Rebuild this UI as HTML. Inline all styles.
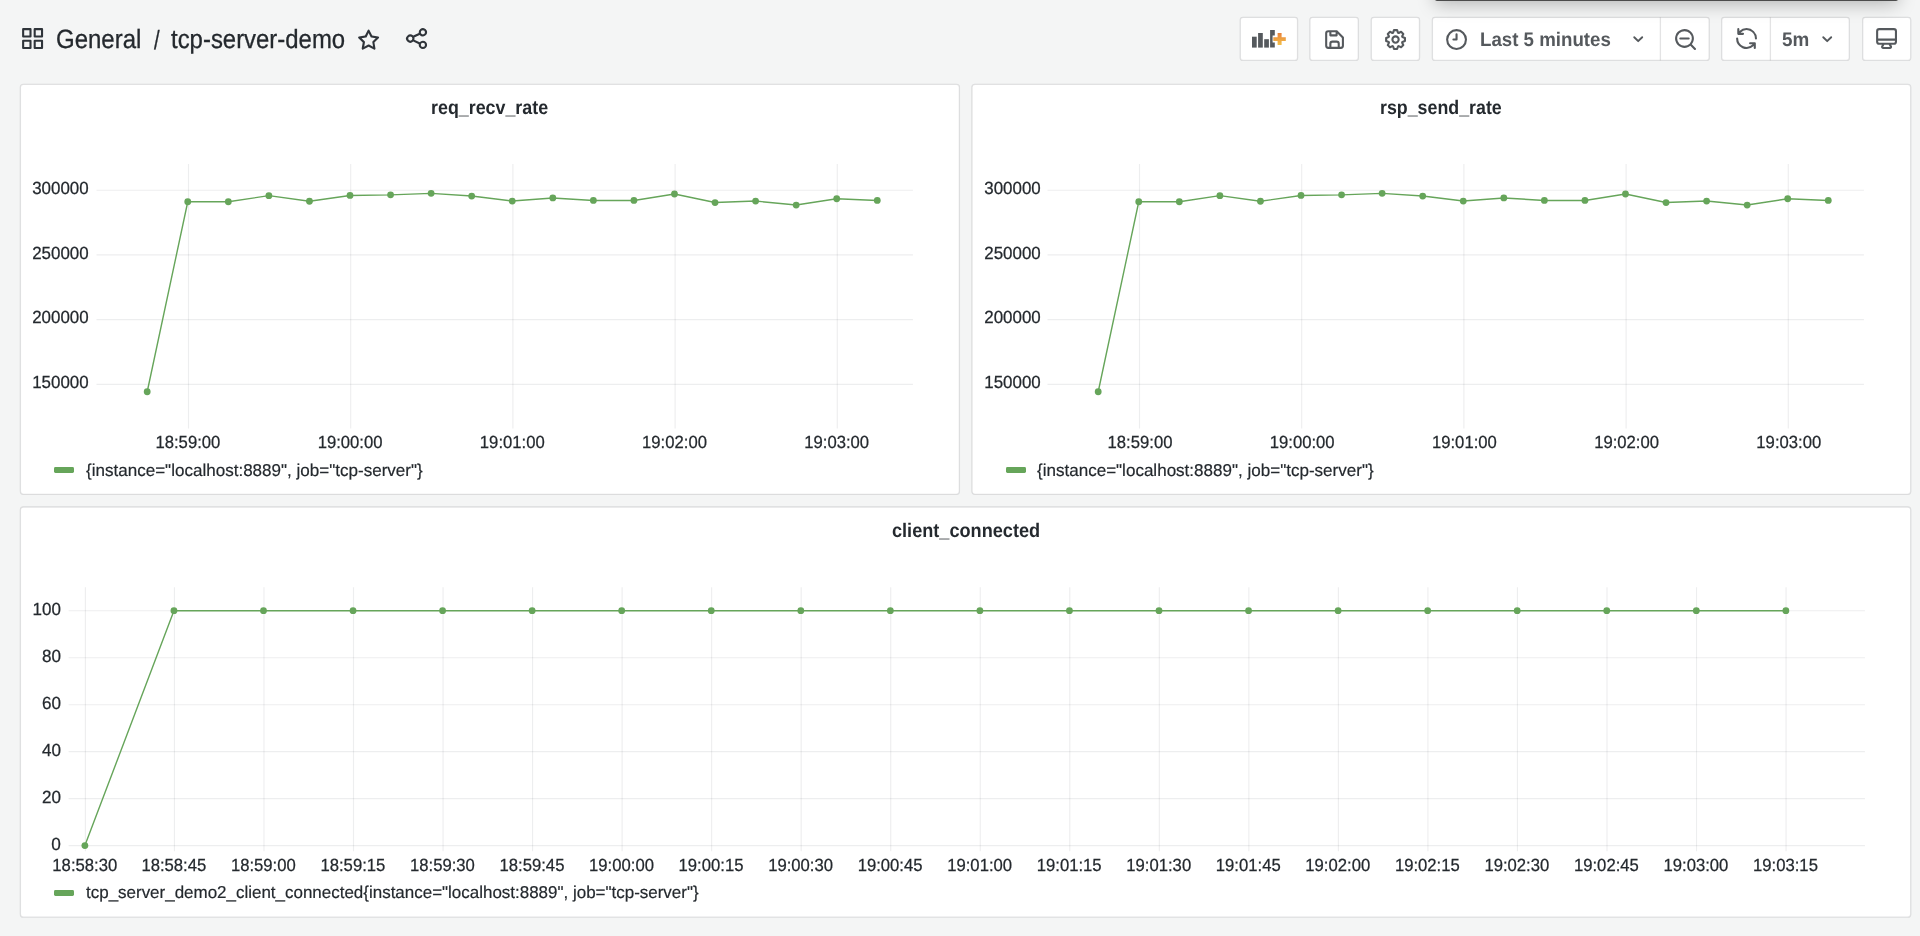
<!DOCTYPE html>
<html lang="en"><head><meta charset="utf-8"><title>tcp-server-demo - Grafana</title>
<style>
html,body{margin:0;padding:0}
body{width:1920px;height:936px;overflow:hidden;position:relative;background:#f4f5f5;
 font-family:"Liberation Sans", sans-serif;color:#24292e}
.ic,.ch,.sw,.t,.bg{position:absolute}
.bg{left:0;top:0}
.ch text{font-family:"Liberation Sans", sans-serif;text-rendering:geometricPrecision}
.sw{width:19.7px;height:5.7px;border-radius:1.4px;background:#66a55a}
.t{white-space:nowrap;transform-origin:0 0;text-rendering:geometricPrecision}
.tip{position:absolute;left:1434.6px;top:-30px;width:463.6px;height:31px;background:#4c4c4c;border-radius:2px;
 box-shadow:0 3px 18px rgba(0,0,0,.27)}
#root{position:absolute;left:0;top:0;width:1920px;height:936px;will-change:transform}
</style></head><body><div id="root">
<svg class="bg" width="1920" height="936" viewBox="0 0 1920 936"><rect x="1240.3" y="17.4" width="57.25" height="43.05" rx="2.7" ry="2.7" fill="#fff" stroke="rgba(36,41,46,0.13)" stroke-width="1.3"/><rect x="1309.9" y="17.4" width="48.4" height="43.05" rx="2.7" ry="2.7" fill="#fff" stroke="rgba(36,41,46,0.13)" stroke-width="1.3"/><rect x="1371.3" y="17.4" width="48.2" height="43.05" rx="2.7" ry="2.7" fill="#fff" stroke="rgba(36,41,46,0.13)" stroke-width="1.3"/><rect x="1432.4" y="17.4" width="276.8" height="43.05" rx="2.7" ry="2.7" fill="#fff" stroke="rgba(36,41,46,0.13)" stroke-width="1.3"/><rect x="1721.7" y="17.4" width="127.6" height="43.05" rx="2.7" ry="2.7" fill="#fff" stroke="rgba(36,41,46,0.13)" stroke-width="1.3"/><rect x="1862.7" y="17.4" width="48" height="43.05" rx="2.7" ry="2.7" fill="#fff" stroke="rgba(36,41,46,0.13)" stroke-width="1.3"/><path d="M1660.4 17.4V60.45" stroke="rgba(36,41,46,0.13)" stroke-width="1.3"/><path d="M1770.4 17.4V60.45" stroke="rgba(36,41,46,0.13)" stroke-width="1.3"/><rect x="20.4" y="84.3" width="939" height="410" rx="3" ry="3" fill="#fff" stroke="rgba(36,41,46,0.13)" stroke-width="1.3"/><rect x="972" y="84.3" width="938.7" height="410" rx="3" ry="3" fill="#fff" stroke="rgba(36,41,46,0.13)" stroke-width="1.3"/><rect x="20.4" y="507" width="1890.3" height="410.2" rx="3" ry="3" fill="#fff" stroke="rgba(36,41,46,0.13)" stroke-width="1.3"/></svg><div class="tip"></div>
<svg class="ic" style="left:19.55px;top:26.2px" width="25.2" height="25.2" viewBox="0 0 24 24"><path fill="#2f343a" d="M10,13H3a1,1,0,0,0-1,1v7a1,1,0,0,0,1,1h7a1,1,0,0,0,1-1V14A1,1,0,0,0,10,13ZM9,20H4V15H9ZM21,2H14a1,1,0,0,0-1,1v7a1,1,0,0,0,1,1h7a1,1,0,0,0,1-1V3A1,1,0,0,0,21,2ZM20,9H15V4h5Zm1,4H14a1,1,0,0,0-1,1v7a1,1,0,0,0,1,1h7a1,1,0,0,0,1-1V14A1,1,0,0,0,21,13Zm-1,7H15V15h5ZM10,2H3A1,1,0,0,0,2,3v7a1,1,0,0,0,1,1h7a1,1,0,0,0,1-1V3A1,1,0,0,0,10,2ZM9,9H4V4H9Z"/></svg>
<div id="t_general" class="t" style="left:56.06px;top:25.01px;font-size:26.4px;line-height:29.04px;color:#24292e;font-weight:normal;-webkit-text-stroke:0.3px #24292e;transform:scaleX(0.9087)">General</div><div id="t_slash" class="t" style="left:153.90px;top:26.01px;font-size:26.4px;line-height:29.04px;color:#24292e;font-weight:normal;-webkit-text-stroke:0.3px #24292e;transform:scaleX(0.7659)">/</div><div id="t_name" class="t" style="left:170.80px;top:25.01px;font-size:26.4px;line-height:29.04px;color:#24292e;font-weight:normal;-webkit-text-stroke:0.3px #24292e;transform:scaleX(0.9064)">tcp-server-demo</div>
<svg class="ic" style="left:355.97px;top:26.6px" width="25.2" height="25.2" viewBox="0 0 24 24"><path fill="#2f343a" d="M22,9.67A1,1,0,0,0,21.14,9l-5.69-.83L12.9,3a1,1,0,0,0-1.8,0L8.55,8.16,2.86,9a1,1,0,0,0-.81.68,1,1,0,0,0,.25,1l4.13,4-1,5.68A1,1,0,0,0,6.9,21.44L12,18.77l5.1,2.67a.93.93,0,0,0,.46.12,1,1,0,0,0,.59-.19,1,1,0,0,0,.4-1l-1-5.68,4.13-4A1,1,0,0,0,22,9.67Zm-6.15,4a1,1,0,0,0-.29.88l.72,4.2-3.76-2a1.06,1.06,0,0,0-.94,0l-3.76,2,.72-4.2a1,1,0,0,0-.29-.88l-3-3,4.21-.61a1,1,0,0,0,.76-.55L12,5.7l1.88,3.82a1,1,0,0,0,.76.55l4.21.61Z"/></svg>
<svg class="ic" style="left:403.8px;top:26.3px" width="25.2" height="25.2" viewBox="0 0 24 24"><path fill="#2f343a" d="M18,14a4,4,0,0,0-3.08,1.48l-5.1-2.35a3.64,3.64,0,0,0,0-2.26l5.1-2.35A4,4,0,1,0,14,6a4.17,4.17,0,0,0,.07.71L8.79,9.14a4,4,0,1,0,0,5.72l5.28,2.43A4.17,4.17,0,0,0,14,18a4,4,0,1,0,4-4ZM18,4a2,2,0,1,1-2,2A2,2,0,0,1,18,4ZM6,14a2,2,0,1,1,2-2A2,2,0,0,1,6,14Zm12,6a2,2,0,1,1,2-2A2,2,0,0,1,18,20Z"/></svg>
<svg class="ic" style="left:1250px;top:27px" width="40" height="24" viewBox="1250 27 40 24"><defs><linearGradient id="og" x1="0" y1="0" x2="0" y2="1"><stop offset="0" stop-color="#e9823a"/><stop offset="1" stop-color="#f2c04b"/></linearGradient></defs><g fill="#55595d"><rect x="1252" y="36.7" width="4.7" height="10.9"/><rect x="1258.1" y="33" width="4.7" height="14.6"/><rect x="1264.2" y="39.2" width="4.7" height="8.4"/><path d="M1270.1 30h4.7v5.6h-2.2v6.8h2.2v5.2h-4.7z"/></g><path fill="url(#og)" d="M1277.6 33h4v4.2h4.2v3.8h-4.2v4h-4v-4h-4.3v-3.8h4.3z"/></svg>
<svg class="ic" style="left:1321.8500000000001px;top:26.85px" width="25.1" height="25.1" viewBox="0 0 24 24"><path fill="#55595d" d="m20.71 9.29-6-6a1 1 0 0 0-.32-.21A1.09 1.09 0 0 0 14 3H6a3 3 0 0 0-3 3v12a3 3 0 0 0 3 3h12a3 3 0 0 0 3-3v-8a1 1 0 0 0-.29-.71ZM9 5h4v2H9Zm6 14H9v-3a1 1 0 0 1 1-1h4a1 1 0 0 1 1 1Zm4-1a1 1 0 0 1-1 1h-1v-3a3 3 0 0 0-3-3h-4a3 3 0 0 0-3 3v3H6a1 1 0 0 1-1-1V6a1 1 0 0 1 1-1h1v3a1 1 0 0 0 1 1h6a1 1 0 0 0 1-1V6.41l4 4Z"/></svg>
<svg class="ic" style="left:1382.9px;top:26.85px" width="25.1" height="25.1" viewBox="0 0 24 24"><path fill="#55595d" d="M21.32,9.55l-1.89-.63.89-1.78A1,1,0,0,0,20.13,6L18,3.87a1,1,0,0,0-1.15-.19l-1.78.89-.63-1.89A1,1,0,0,0,13.5,2h-3a1,1,0,0,0-.95.68L8.92,4.57,7.14,3.68A1,1,0,0,0,6,3.87L3.87,6a1,1,0,0,0-.19,1.15l.89,1.78-1.89.63A1,1,0,0,0,2,10.5v3a1,1,0,0,0,.68.95l1.89.63-.89,1.78A1,1,0,0,0,3.87,18L6,20.13a1,1,0,0,0,1.15.19l1.78-.89.63,1.89a1,1,0,0,0,.95.68h3a1,1,0,0,0,.95-.68l.63-1.89,1.78.89A1,1,0,0,0,18,20.13L20.13,18a1,1,0,0,0,.19-1.15l-.89-1.78,1.89-.63A1,1,0,0,0,22,13.5v-3A1,1,0,0,0,21.32,9.55ZM20,12.78l-1.2.4A2,2,0,0,0,17.64,16l.57,1.14-1.1,1.1L16,17.64a2,2,0,0,0-2.79,1.16l-.4,1.2H11.22l-.4-1.2A2,2,0,0,0,8,17.64l-1.14.57-1.1-1.1L6.36,16A2,2,0,0,0,5.2,13.18l-1.2-.4V11.22l1.2-.4A2,2,0,0,0,6.36,8L5.79,6.89l1.1-1.1L8,6.36A2,2,0,0,0,10.82,5.2l.4-1.2h1.56l.4,1.2A2,2,0,0,0,16,6.36l1.14-.57,1.1,1.1L17.64,8a2,2,0,0,0,1.16,2.79l1.2.4ZM12,8a4,4,0,1,0,4,4A4,4,0,0,0,12,8Zm0,6a2,2,0,1,1,2-2A2,2,0,0,1,12,14Z"/></svg>
<svg class="ic" style="left:1443.9px;top:26.85px" width="25.1" height="25.1" viewBox="0 0 24 24"><path fill="#55595d" d="M12,2A10,10,0,1,0,22,12,10,10,0,0,0,12,2Zm0,18a8,8,0,1,1,8-8A8,8,0,0,1,12,20ZM12,6a1,1,0,0,0-1,1v4H9a1,1,0,0,0,0,2h3a1,1,0,0,0,1-1V7A1,1,0,0,0,12,6Z"/></svg>
<div id="t_last" class="t" style="left:1480.31px;top:30.01px;font-size:19.7px;line-height:21.67px;color:#55595d;font-weight:bold;transform:scaleX(0.9492)">Last 5 minutes</div>
<svg class="ic" style="left:1627.0px;top:27.9px" width="22.4" height="22.4" viewBox="0 0 24 24"><path fill="#55595d" d="M17,9.17a1,1,0,0,0-1.41,0L12,12.71,8.46,9.17a1,1,0,0,0-1.41,0,1,1,0,0,0,0,1.42l4.24,4.24a1,1,0,0,0,1.42,0L17,10.59A1,1,0,0,0,17,9.17Z"/></svg>
<svg class="ic" style="left:1672.8px;top:26.85px" width="25.1" height="25.1" viewBox="0 0 24 24"><path fill="#55595d" d="M21.71,20.29,18,16.61A9,9,0,1,0,16.61,18l3.68,3.68a1,1,0,0,0,1.42,0A1,1,0,0,0,21.71,20.29ZM11,18a7,7,0,1,1,7-7A7,7,0,0,1,11,18Zm4-8H7a1,1,0,0,0,0,2h8a1,1,0,0,0,0-2Z"/></svg>
<svg class="ic" style="left:1733.75px;top:26.45px" width="25.1" height="25.1" viewBox="0 0 24 24"><path fill="#55595d" d="M19.91,15.51H15.38a1,1,0,0,0,0,2h2.4A8,8,0,0,1,4,12a1,1,0,0,0-2,0,10,10,0,0,0,16.88,7.23V21a1,1,0,0,0,2,0V16.5A1,1,0,0,0,19.91,15.51ZM12,2A10,10,0,0,0,5.12,4.77V3a1,1,0,0,0-2,0V7.5a1,1,0,0,0,1,1h4.5a1,1,0,0,0,0-2H6.22A8,8,0,0,1,20,12a1,1,0,0,0,2,0A10,10,0,0,0,12,2Z"/></svg>
<div id="t_5m" class="t" style="left:1782.10px;top:30.01px;font-size:19.7px;line-height:21.67px;color:#55595d;font-weight:bold;transform:scaleX(0.9576)">5m</div>
<svg class="ic" style="left:1815.7px;top:27.9px" width="22.4" height="22.4" viewBox="0 0 24 24"><path fill="#55595d" d="M17,9.17a1,1,0,0,0-1.41,0L12,12.71,8.46,9.17a1,1,0,0,0-1.41,0,1,1,0,0,0,0,1.42l4.24,4.24a1,1,0,0,0,1.42,0L17,10.59A1,1,0,0,0,17,9.17Z"/></svg>
<svg class="ic" style="left:1874.0px;top:26.45px" width="25.1" height="25.1" viewBox="0 0 24 24"><path fill="#55595d" d="M19,2H5A3,3,0,0,0,2,5V15a3,3,0,0,0,3,3H7.64l-.58,1a2,2,0,0,0,0,2,2,2,0,0,0,1.75,1h6.46A2,2,0,0,0,17,21a2,2,0,0,0,0-2l-.59-1H19a3,3,0,0,0,3-3V5A3,3,0,0,0,19,2ZM8.77,20,9.91,18h4.17l1.15,2ZM20,15a1,1,0,0,1-1,1H5a1,1,0,0,1-1-1V14H20Zm0-3H4V5A1,1,0,0,1,5,4H19a1,1,0,0,1,1,1Z"/></svg>
<div id="t_p1" class="t" style="left:431.10px;top:98.00px;font-size:19.6px;line-height:21.56px;color:#24292e;font-weight:bold;transform:scaleX(0.9111)">req_recv_rate</div><svg class="ch" style="left:21px;top:140px" width="936" height="320" viewBox="21 140 936 320"><g stroke="rgba(0,10,23,0.07)" stroke-width="1.15" fill="none"><path d="M188.5 164.1V428.4"/><path d="M350.7 164.1V428.4"/><path d="M512.9 164.1V428.4"/><path d="M675.1 164.1V428.4"/><path d="M837.3 164.1V428.4"/><path d="M96.5 190.2H912.9"/><path d="M96.5 254.9H912.9"/><path d="M96.5 319.6H912.9"/><path d="M96.5 384.4H912.9"/></g><g fill="#24292e" stroke="#24292e" stroke-width="0.25" font-size="17.6" text-anchor="end"><text x="88.7" y="194" textLength="56.5" lengthAdjust="spacingAndGlyphs">300000</text><text x="88.7" y="259" textLength="56.5" lengthAdjust="spacingAndGlyphs">250000</text><text x="88.7" y="323" textLength="56.5" lengthAdjust="spacingAndGlyphs">200000</text><text x="88.7" y="388" textLength="56.5" lengthAdjust="spacingAndGlyphs">150000</text></g><g fill="#24292e" stroke="#24292e" stroke-width="0.25" font-size="17.6" text-anchor="middle"><text x="187.9" y="448" textLength="64.9" lengthAdjust="spacingAndGlyphs">18:59:00</text><text x="350.1" y="448" textLength="64.9" lengthAdjust="spacingAndGlyphs">19:00:00</text><text x="512.3" y="448" textLength="64.9" lengthAdjust="spacingAndGlyphs">19:01:00</text><text x="674.5" y="448" textLength="64.9" lengthAdjust="spacingAndGlyphs">19:02:00</text><text x="836.7" y="448" textLength="64.9" lengthAdjust="spacingAndGlyphs">19:03:00</text></g><path d="M147.2 391.75L187.76 201.75L228.32 201.75L268.88 195.65L309.44 201.25L350 195.45L390.56 194.85L431.12 193.35L471.68 196.05L512.24 201.05L552.8 197.95L593.36 200.45L633.92 200.45L674.48 194L715.04 202.55L755.6 201.05L796.16 205.05L836.72 198.75L877.28 200.45" fill="none" stroke="#66a55a" stroke-width="1.4" stroke-linejoin="round"/><g fill="#66a55a"><circle cx="147.2" cy="391.75" r="3.4"/><circle cx="187.76" cy="201.75" r="3.4"/><circle cx="228.32" cy="201.75" r="3.4"/><circle cx="268.88" cy="195.65" r="3.4"/><circle cx="309.44" cy="201.25" r="3.4"/><circle cx="350" cy="195.45" r="3.4"/><circle cx="390.56" cy="194.85" r="3.4"/><circle cx="431.12" cy="193.35" r="3.4"/><circle cx="471.68" cy="196.05" r="3.4"/><circle cx="512.24" cy="201.05" r="3.4"/><circle cx="552.8" cy="197.95" r="3.4"/><circle cx="593.36" cy="200.45" r="3.4"/><circle cx="633.92" cy="200.45" r="3.4"/><circle cx="674.48" cy="194" r="3.4"/><circle cx="715.04" cy="202.55" r="3.4"/><circle cx="755.6" cy="201.05" r="3.4"/><circle cx="796.16" cy="205.05" r="3.4"/><circle cx="836.72" cy="198.75" r="3.4"/><circle cx="877.28" cy="200.45" r="3.4"/></g></svg><div class="sw" style="left:54.0px;top:467.2px"></div><div id="t_l1" class="t" style="left:85.87px;top:461.01px;font-size:17.2px;line-height:18.92px;color:#24292e;font-weight:normal;-webkit-text-stroke:0.2px #24292e;transform:scaleX(0.9913)">{instance="localhost:8889", job="tcp-server"}</div>
<div id="t_p2" class="t" style="left:1380.39px;top:98.00px;font-size:19.6px;line-height:21.56px;color:#24292e;font-weight:bold;transform:scaleX(0.9086)">rsp_send_rate</div><svg class="ch" style="left:971.9px;top:140px" width="936" height="320" viewBox="971.9 140 936 320"><g stroke="rgba(0,10,23,0.07)" stroke-width="1.15" fill="none"><path d="M1139.4 164.1V428.4"/><path d="M1301.6 164.1V428.4"/><path d="M1463.8 164.1V428.4"/><path d="M1626 164.1V428.4"/><path d="M1788.2 164.1V428.4"/><path d="M1047.4 190.2H1863.8"/><path d="M1047.4 254.9H1863.8"/><path d="M1047.4 319.6H1863.8"/><path d="M1047.4 384.4H1863.8"/></g><g fill="#24292e" stroke="#24292e" stroke-width="0.25" font-size="17.6" text-anchor="end"><text x="1040.7" y="194" textLength="56.5" lengthAdjust="spacingAndGlyphs">300000</text><text x="1040.7" y="259" textLength="56.5" lengthAdjust="spacingAndGlyphs">250000</text><text x="1040.7" y="323" textLength="56.5" lengthAdjust="spacingAndGlyphs">200000</text><text x="1040.7" y="388" textLength="56.5" lengthAdjust="spacingAndGlyphs">150000</text></g><g fill="#24292e" stroke="#24292e" stroke-width="0.25" font-size="17.6" text-anchor="middle"><text x="1139.9" y="448" textLength="64.9" lengthAdjust="spacingAndGlyphs">18:59:00</text><text x="1302.1" y="448" textLength="64.9" lengthAdjust="spacingAndGlyphs">19:00:00</text><text x="1464.3" y="448" textLength="64.9" lengthAdjust="spacingAndGlyphs">19:01:00</text><text x="1626.5" y="448" textLength="64.9" lengthAdjust="spacingAndGlyphs">19:02:00</text><text x="1788.7" y="448" textLength="64.9" lengthAdjust="spacingAndGlyphs">19:03:00</text></g><path d="M1098.1 391.75L1138.66 201.75L1179.22 201.75L1219.78 195.65L1260.34 201.25L1300.9 195.45L1341.46 194.85L1382.02 193.35L1422.58 196.05L1463.14 201.05L1503.7 197.95L1544.26 200.45L1584.82 200.45L1625.38 194L1665.94 202.55L1706.5 201.05L1747.06 205.05L1787.62 198.75L1828.18 200.45" fill="none" stroke="#66a55a" stroke-width="1.4" stroke-linejoin="round"/><g fill="#66a55a"><circle cx="1098.1" cy="391.75" r="3.4"/><circle cx="1138.66" cy="201.75" r="3.4"/><circle cx="1179.22" cy="201.75" r="3.4"/><circle cx="1219.78" cy="195.65" r="3.4"/><circle cx="1260.34" cy="201.25" r="3.4"/><circle cx="1300.9" cy="195.45" r="3.4"/><circle cx="1341.46" cy="194.85" r="3.4"/><circle cx="1382.02" cy="193.35" r="3.4"/><circle cx="1422.58" cy="196.05" r="3.4"/><circle cx="1463.14" cy="201.05" r="3.4"/><circle cx="1503.7" cy="197.95" r="3.4"/><circle cx="1544.26" cy="200.45" r="3.4"/><circle cx="1584.82" cy="200.45" r="3.4"/><circle cx="1625.38" cy="194" r="3.4"/><circle cx="1665.94" cy="202.55" r="3.4"/><circle cx="1706.5" cy="201.05" r="3.4"/><circle cx="1747.06" cy="205.05" r="3.4"/><circle cx="1787.62" cy="198.75" r="3.4"/><circle cx="1828.18" cy="200.45" r="3.4"/></g></svg><div class="sw" style="left:1006.0px;top:467.2px"></div><div id="t_l2" class="t" style="left:1037.41px;top:461.01px;font-size:17.2px;line-height:18.92px;color:#24292e;font-weight:normal;-webkit-text-stroke:0.2px #24292e;transform:scaleX(0.9910)">{instance="localhost:8889", job="tcp-server"}</div>
<div id="t_p3" class="t" style="left:891.67px;top:521.01px;font-size:19.6px;line-height:21.56px;color:#24292e;font-weight:bold;transform:scaleX(0.9254)">client_connected</div><svg class="ch" style="left:21px;top:560px" width="1888" height="320" viewBox="21 560 1888 320"><g stroke="rgba(0,10,23,0.07)" stroke-width="1.15" fill="none"><path d="M85.4 587.3V851.3"/><path d="M174.44 587.3V851.3"/><path d="M263.97 587.3V851.3"/><path d="M353.5 587.3V851.3"/><path d="M443.04 587.3V851.3"/><path d="M532.57 587.3V851.3"/><path d="M622.11 587.3V851.3"/><path d="M711.64 587.3V851.3"/><path d="M801.18 587.3V851.3"/><path d="M890.71 587.3V851.3"/><path d="M980.25 587.3V851.3"/><path d="M1069.79 587.3V851.3"/><path d="M1159.32 587.3V851.3"/><path d="M1248.86 587.3V851.3"/><path d="M1338.39 587.3V851.3"/><path d="M1427.92 587.3V851.3"/><path d="M1517.46 587.3V851.3"/><path d="M1607 587.3V851.3"/><path d="M1696.53 587.3V851.3"/><path d="M1786.07 587.3V851.3"/><path d="M68.6 610.7H1864.9"/><path d="M68.6 657.7H1864.9"/><path d="M68.6 704.7H1864.9"/><path d="M68.6 751.6H1864.9"/><path d="M68.6 798.6H1864.9"/><path d="M68.6 845.6H1864.9"/></g><g fill="#24292e" stroke="#24292e" stroke-width="0.25" font-size="17.6" text-anchor="end"><text x="60.9" y="615" textLength="28.3" lengthAdjust="spacingAndGlyphs">100</text><text x="60.9" y="662" textLength="19.0" lengthAdjust="spacingAndGlyphs">80</text><text x="60.9" y="709" textLength="19.0" lengthAdjust="spacingAndGlyphs">60</text><text x="60.9" y="756" textLength="19.0" lengthAdjust="spacingAndGlyphs">40</text><text x="60.9" y="803" textLength="19.0" lengthAdjust="spacingAndGlyphs">20</text><text x="60.9" y="850" textLength="9.6" lengthAdjust="spacingAndGlyphs">0</text></g><g fill="#24292e" stroke="#24292e" stroke-width="0.25" font-size="17.6" text-anchor="middle"><text x="84.8" y="871" textLength="64.9" lengthAdjust="spacingAndGlyphs">18:58:30</text><text x="173.84" y="871" textLength="64.9" lengthAdjust="spacingAndGlyphs">18:58:45</text><text x="263.37" y="871" textLength="64.9" lengthAdjust="spacingAndGlyphs">18:59:00</text><text x="352.9" y="871" textLength="64.9" lengthAdjust="spacingAndGlyphs">18:59:15</text><text x="442.44" y="871" textLength="64.9" lengthAdjust="spacingAndGlyphs">18:59:30</text><text x="531.97" y="871" textLength="64.9" lengthAdjust="spacingAndGlyphs">18:59:45</text><text x="621.51" y="871" textLength="64.9" lengthAdjust="spacingAndGlyphs">19:00:00</text><text x="711.04" y="871" textLength="64.9" lengthAdjust="spacingAndGlyphs">19:00:15</text><text x="800.58" y="871" textLength="64.9" lengthAdjust="spacingAndGlyphs">19:00:30</text><text x="890.11" y="871" textLength="64.9" lengthAdjust="spacingAndGlyphs">19:00:45</text><text x="979.65" y="871" textLength="64.9" lengthAdjust="spacingAndGlyphs">19:01:00</text><text x="1069.19" y="871" textLength="64.9" lengthAdjust="spacingAndGlyphs">19:01:15</text><text x="1158.72" y="871" textLength="64.9" lengthAdjust="spacingAndGlyphs">19:01:30</text><text x="1248.26" y="871" textLength="64.9" lengthAdjust="spacingAndGlyphs">19:01:45</text><text x="1337.79" y="871" textLength="64.9" lengthAdjust="spacingAndGlyphs">19:02:00</text><text x="1427.33" y="871" textLength="64.9" lengthAdjust="spacingAndGlyphs">19:02:15</text><text x="1516.86" y="871" textLength="64.9" lengthAdjust="spacingAndGlyphs">19:02:30</text><text x="1606.4" y="871" textLength="64.9" lengthAdjust="spacingAndGlyphs">19:02:45</text><text x="1695.93" y="871" textLength="64.9" lengthAdjust="spacingAndGlyphs">19:03:00</text><text x="1785.47" y="871" textLength="64.9" lengthAdjust="spacingAndGlyphs">19:03:15</text></g><path d="M84.9 845.6L173.94 610.7L263.49 610.7L353.04 610.7L442.59 610.7L532.14 610.7L621.7 610.7L711.25 610.7L800.8 610.7L890.35 610.7L979.9 610.7L1069.45 610.7L1159 610.7L1248.55 610.7L1338.1 610.7L1427.66 610.7L1517.21 610.7L1606.76 610.7L1696.31 610.7L1785.86 610.7" fill="none" stroke="#66a55a" stroke-width="1.4" stroke-linejoin="round"/><g fill="#66a55a"><circle cx="84.9" cy="845.6" r="3.4"/><circle cx="173.94" cy="610.7" r="3.4"/><circle cx="263.49" cy="610.7" r="3.4"/><circle cx="353.04" cy="610.7" r="3.4"/><circle cx="442.59" cy="610.7" r="3.4"/><circle cx="532.14" cy="610.7" r="3.4"/><circle cx="621.7" cy="610.7" r="3.4"/><circle cx="711.25" cy="610.7" r="3.4"/><circle cx="800.8" cy="610.7" r="3.4"/><circle cx="890.35" cy="610.7" r="3.4"/><circle cx="979.9" cy="610.7" r="3.4"/><circle cx="1069.45" cy="610.7" r="3.4"/><circle cx="1159" cy="610.7" r="3.4"/><circle cx="1248.55" cy="610.7" r="3.4"/><circle cx="1338.1" cy="610.7" r="3.4"/><circle cx="1427.66" cy="610.7" r="3.4"/><circle cx="1517.21" cy="610.7" r="3.4"/><circle cx="1606.76" cy="610.7" r="3.4"/><circle cx="1696.31" cy="610.7" r="3.4"/><circle cx="1785.86" cy="610.7" r="3.4"/></g></svg><div class="sw" style="left:54.0px;top:890.1px"></div><div id="t_l3" class="t" style="left:85.97px;top:883.01px;font-size:17.2px;line-height:18.92px;color:#24292e;font-weight:normal;-webkit-text-stroke:0.2px #24292e;transform:scaleX(0.9871)">tcp_server_demo2_client_connected{instance="localhost:8889", job="tcp-server"}</div>
</div></body></html>
